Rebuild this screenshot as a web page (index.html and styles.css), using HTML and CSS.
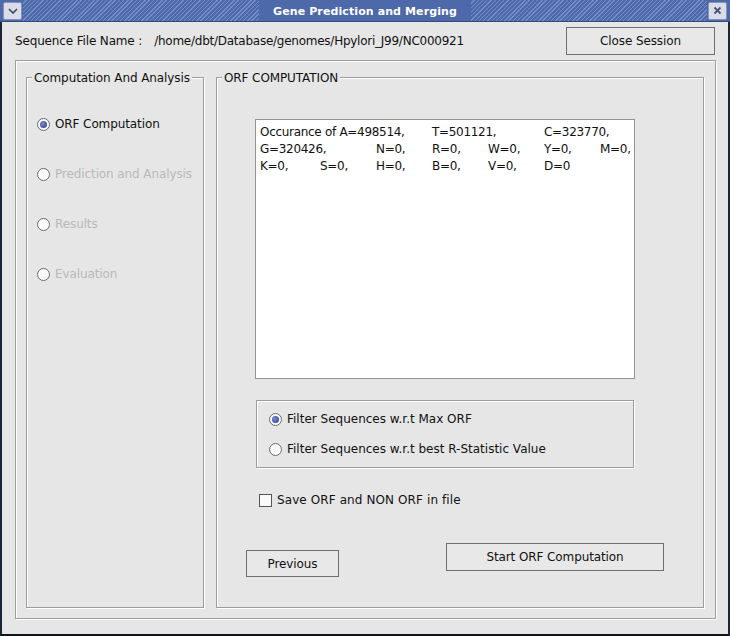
FILE: index.html
```html
<!DOCTYPE html>
<html>
<head>
<meta charset="utf-8">
<link rel="stylesheet" href="styles.css">
</head>
<body>
<div class="window">
  <div class="titlebar">
    <div class="tbtn tbtn-menu">
      <svg width="10" height="6" viewBox="0 0 10 6"><path d="M1 1 L5 5 L9 1" fill="none" stroke="#3a4560" stroke-width="1.6"/></svg>
    </div>
    <div class="stripes"></div>
    <div class="title">Gene Prediction and Merging</div>
    <div class="stripes"></div>
    <div class="tbtn tbtn-close">
      <svg width="9" height="9" viewBox="0 0 9 9"><path d="M1.5 1.5 L7.5 7.5 M7.5 1.5 L1.5 7.5" fill="none" stroke="#4a5470" stroke-width="1.8"/></svg>
    </div>
  </div>
  <div class="body">
    <div class="header">
      <span class="seq-label">Sequence File Name :</span>
      <span class="seq-path">/home/dbt/Database/genomes/Hpylori_J99/NC000921</span>
      <button class="btn btn-close">Close Session</button>
    </div>
    <div class="outer etched">
      <div class="panel panel-left etched">
        <span class="ptitle">Computation And Analysis</span>
        <div class="steps">
          <div class="opt"><span class="radio on"></span><span>ORF Computation</span></div>
          <div class="opt disabled"><span class="radio"></span><span>Prediction and Analysis</span></div>
          <div class="opt disabled"><span class="radio"></span><span>Results</span></div>
          <div class="opt disabled"><span class="radio"></span><span>Evaluation</span></div>
        </div>
      </div>
      <div class="panel panel-right etched">
        <span class="ptitle">ORF COMPUTATION</span>
        <div class="textarea">
          <div class="counts">
            <span class="c13">Occurance of A=498514,</span><span class="c45">T=501121,</span><span class="c6">C=323770,</span>
            <span class="c12">G=320426,</span><span>N=0,</span><span>R=0,</span><span>W=0,</span><span>Y=0,</span><span>M=0,</span>
            <span>K=0,</span><span>S=0,</span><span>H=0,</span><span>B=0,</span><span>V=0,</span><span>D=0</span>
          </div>
        </div>
        <div class="filter etched">
          <div class="fopt"><span class="radio on"></span><span>Filter Sequences w.r.t Max ORF</span></div>
          <div class="fopt"><span class="radio"></span><span>Filter Sequences w.r.t best R-Statistic Value</span></div>
        </div>
        <div class="check-row"><span class="checkbox"></span><span>Save ORF and NON ORF in file</span></div>
        <div class="actions">
          <button class="btn btn-prev">Previous</button>
          <button class="btn btn-start">Start ORF Computation</button>
        </div>
      </div>
    </div>
  </div>
</div>
</body>
</html>
```
FILE: styles.css
```css
* { box-sizing: border-box; }
html, body { margin: 0; padding: 0; }
body {
  width: 730px;
  height: 636px;
  font-family: "DejaVu Sans", "Noto Sans", sans-serif;
  font-size: 12px;
  color: #111;
  background: #e6e6e6;
}
.window {
  width: 730px;
  height: 636px;
  display: flex;
  flex-direction: column;
  background: #e6e6e6;
  border-left: 2px solid #1e2636;
  border-right: 2px solid #1e2636;
  border-bottom: 2px solid #10141c;
}
.titlebar {
  height: 22px;
  display: flex;
  align-items: center;
  background: #4d69a9;
  border-bottom: 1px solid #34497c;
  margin: 0 -2px;
  padding: 0 2px;
}
.stripes {
  flex: 1;
  height: 100%;
  background: repeating-linear-gradient(135deg, #4d69a9 0px, #4d69a9 2px, #7590c8 2px, #7590c8 3px);
}
.title {
  padding: 1px 14px 0;
  color: #fff;
  font-weight: bold;
  font-size: 11px;
  letter-spacing: 0.1px;
  line-height: 21px;
}
.tbtn {
  width: 19px;
  height: 18px;
  background: #d8dde9;
  border: 1px solid #8a94b0;
  border-radius: 2px;
  display: flex;
  align-items: center;
  justify-content: center;
  margin: 0 1px;
}
.body {
  flex: 1;
  padding: 5px 13px 0 13px;
}
.header {
  height: 28px;
  display: flex;
  align-items: center;
  white-space: nowrap;
}
.seq-label { margin-right: 12px; letter-spacing: -0.15px; }
.seq-path { letter-spacing: -0.25px; }
.btn {
  font-family: "DejaVu Sans", "Noto Sans", sans-serif;
  font-size: 12px;
  color: #111;
  background: #e8e8e8;
  border: 1px solid #6e6e6e;
  padding: 0;
  letter-spacing: -0.1px;
}
.btn-close {
  margin-left: auto;
  width: 149px;
  height: 28px;
}
.etched {
  border: 1px solid #9d9d9d;
  box-shadow: 1px 1px 0 #ffffff, inset 1px 1px 0 #ffffff;
}
.outer {
  margin-top: 5px;
  width: 701px;
  height: 559px;
  display: flex;
  gap: 12px;
  padding: 16px 10px 10px 10px;
}
.panel {
  position: relative;
  height: 531px;
}
.panel-left { width: 178px; }
.panel-right { width: 488px; }
.ptitle {
  position: absolute;
  top: -8px;
  left: 5px;
  padding: 0 2px;
  background: #e6e6e6;
  line-height: 16px;
  letter-spacing: -0.1px;
  white-space: nowrap;
}
.steps {
  padding: 39px 0 0 10px;
}
.opt {
  height: 50px;
  display: flex;
  align-items: flex-start;
  gap: 5px;
  line-height: 15px;
  white-space: nowrap;
  letter-spacing: -0.1px;
}
.opt .radio { margin-top: 1px; }
.opt.disabled { color: #b9b9b9; }
.radio {
  width: 13px;
  height: 13px;
  border-radius: 50%;
  border: 1px solid #6a6a6a;
  background: #fafafa;
  flex: none;
  position: relative;
}
.radio.on::after {
  content: "";
  position: absolute;
  left: 2px;
  top: 2px;
  width: 7px;
  height: 7px;
  border-radius: 50%;
  background: radial-gradient(circle at 40% 40%, #7e8fd0 0%, #3d4f9c 70%);
}
.textarea {
  margin: 41px 0 0 38px;
  width: 380px;
  height: 260px;
  background: #fff;
  border: 1px solid #939393;
  padding: 4px 0 0 4px;
}
.counts {
  display: grid;
  grid-template-columns: 60px 56px 56px 56px 56px 56px auto;
  line-height: 17px;
  white-space: nowrap;
  letter-spacing: -0.3px;
}
.c13 { grid-column: span 3; }
.c45 { grid-column: span 2; }
.c12 { grid-column: span 2; }
.c6 { grid-column: span 2; }
.filter {
  margin: 21px 0 0 39px;
  width: 378px;
  height: 68px;
  padding: 11px 0 0 12px;
}
.fopt {
  height: 30px;
  display: flex;
  align-items: flex-start;
  gap: 5px;
  line-height: 15px;
  white-space: nowrap;
  letter-spacing: 0px;
}
.fopt .radio { margin-top: 1px; }
.check-row {
  margin: 25px 0 0 42px;
  display: flex;
  align-items: center;
  gap: 5px;
  height: 14px;
  letter-spacing: 0.1px;
}
.checkbox {
  width: 13px;
  height: 13px;
  border: 1px solid #555;
  background: #fafafa;
  flex: none;
}
.actions {
  margin: 36px 0 0 29px;
  display: flex;
  align-items: flex-start;
}
.btn-prev {
  margin-top: 7px;
  width: 93px;
  height: 27px;
}
.btn-start {
  margin-left: 107px;
  width: 218px;
  height: 28px;
}
```
